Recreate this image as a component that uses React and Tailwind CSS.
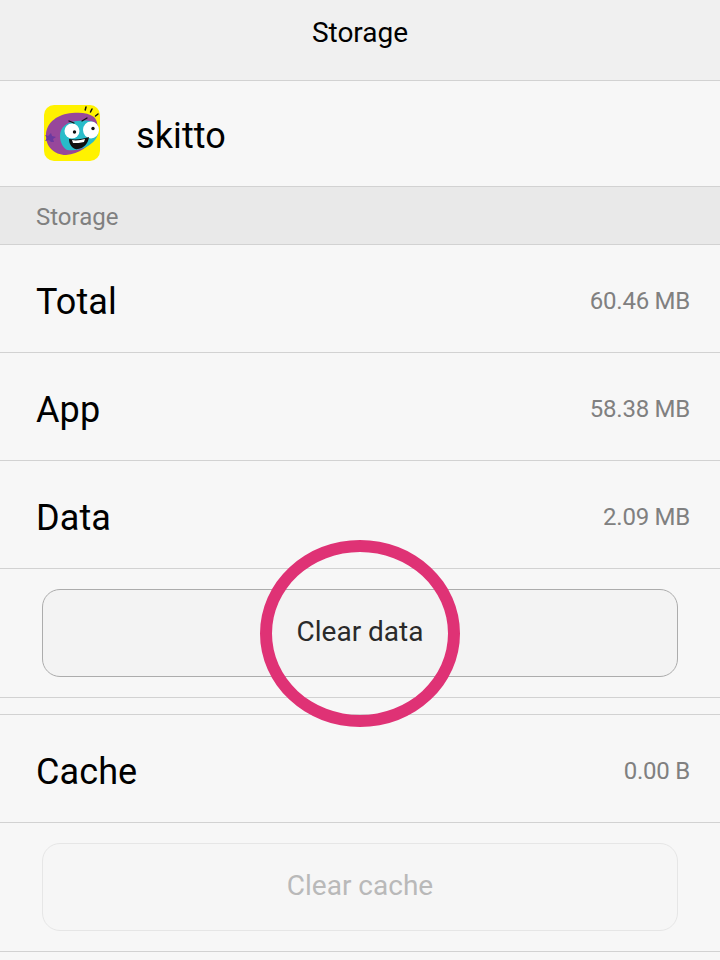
const font = { fontFamily: "Roboto, 'Noto Sans', sans-serif" };

function Row({ label, value }) {
  return (
    <div className="flex h-[108px] items-center justify-between border-b border-[#d2d2d2] pl-9 pr-[30px]">
      <span className="pt-[6px] text-[36px] leading-none tracking-[0.1px] text-black">{label}</span>
      <span className="pt-[5px] text-[24px] leading-none tracking-[-0.25px] text-[#808080]">{value}</span>
    </div>
  );
}

function AppIcon() {
  return (
    <svg width="56" height="56" viewBox="0 0 56 56" className="shrink-0">
      <rect width="56" height="56" rx="10" fill="#fff200" />
      <path d="M2 29C3 17 14 9 28 8c9-1 17 0 22 4 4 4 5 12 1 19-5 10-16 18-29 19C10 50 1 41 2 29z" fill="#97479b" />
      <path d="M16 31c0-9 7-14 17-15 8-1 19-1 21 6 2 7-2 14-10 19-7 4-15 5-21 4-4-2-7-8-7-14z" fill="#29bcc9" />
      <path d="M1 30l3 1 3-3 1 3 4 1-3 2 1 3-3 0-2-2-4 1 2-3z" fill="#6a3aa0" />
      <ellipse cx="28" cy="26" rx="7.5" ry="7.5" fill="#fff" />
      <ellipse cx="47" cy="25" rx="8" ry="8.5" fill="#fff" />
      <circle cx="30.5" cy="27" r="1.7" fill="#111" />
      <circle cx="49" cy="23.5" r="1.7" fill="#111" />
      <path d="M25 34c7 1 14 0 20-2-1 7-5 11-11 12-5 1-9-4-9-10z" fill="#111" />
      <path d="M28 35c4 1 9 0 13-1l-1 3c-3 1-8 1-11 1z" fill="#fff" />
      <path d="M25 16l5 2M38 16l5-3" stroke="#111" strokeWidth="1.3" fill="none" strokeLinecap="round" />
      <path d="M42 2l-.8 3M48 4l-1.5 3M54 9l-2.5 2" stroke="#111" strokeWidth="1.5" strokeLinecap="round" />
    </svg>
  );
}

export default function App() {
  return (
    <div className="relative h-[960px] w-[720px] overflow-hidden bg-[#f7f7f7]" style={font}>
      <header className="flex h-[81px] items-center justify-center border-b border-[#d2d2d2] bg-[#f0f0f0] pb-[14px]">
        <h1 className="text-[28px] font-normal leading-none text-black">Storage</h1>
      </header>

      <div className="flex h-[106px] items-center border-b border-[#d2d2d2] pl-11 pb-[2px]">
        <AppIcon />
        <span className="ml-[36px] pt-[6px] text-[36px] leading-none tracking-[0.1px] text-black">skitto</span>
      </div>

      <div className="flex h-[58px] items-center border-b border-[#d2d2d2] bg-[#e9e9e9] pl-9">
        <span className="pt-[2px] text-[24px] leading-none text-[#808080]">Storage</span>
      </div>

      <Row label="Total" value="60.46 MB" />
      <Row label="App" value="58.38 MB" />
      <Row label="Data" value="2.09 MB" />

      <div className="h-[129px] border-b border-[#d2d2d2] px-[42px] pt-5">
        <button className="flex h-[88px] w-full items-center justify-center rounded-[18px] border border-[#acacac] bg-[#f3f3f3] pb-[2px] text-[28px] leading-none text-[#2a2a2a]">
          Clear data
        </button>
      </div>

      <div className="h-[17px] border-b border-[#d2d2d2]" />

      <Row label="Cache" value="0.00 B" />

      <div className="h-[129px] border-b border-[#d2d2d2] px-[42px] pt-5">
        <button className="flex h-[88px] w-full items-center justify-center rounded-[18px] border border-[#e6e6e6] bg-[#f6f6f6] pb-[2px] text-[28px] leading-none text-[#b9b9b9]">
          Clear cache
        </button>
      </div>

      <div className="absolute left-[260px] top-[540px] h-[187px] w-[200px] rounded-[50%] border-[12px] border-[#df3275]" />
    </div>
  );
}
